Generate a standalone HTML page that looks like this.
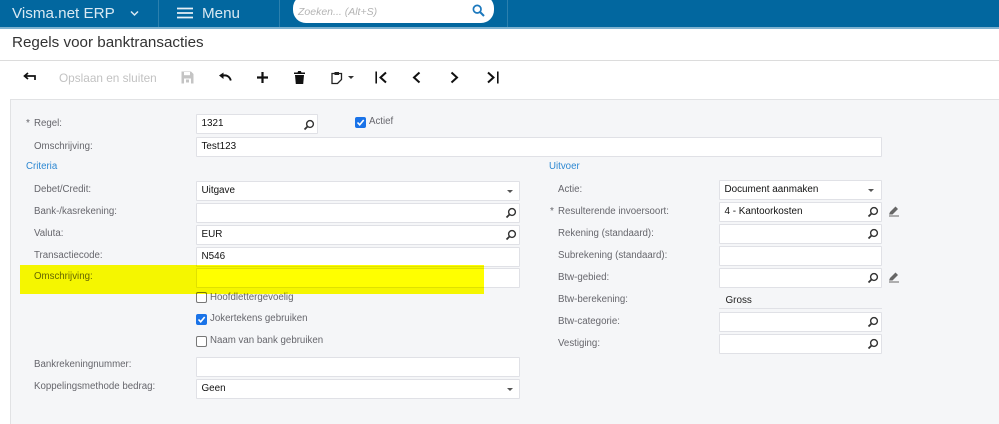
<!DOCTYPE html>
<html><head><meta charset="utf-8">
<style>
html,body{margin:0;padding:0;width:999px;height:424px;overflow:hidden;background:#fff;font-family:"Liberation Sans",sans-serif}
#r{position:relative;width:999px;height:424px;overflow:hidden;filter:blur(.35px)}
#r>*{position:absolute}
.t{white-space:nowrap;line-height:14px}
.l{font-size:9.7px;color:#66666c;white-space:nowrap;line-height:14px}
.b{box-sizing:border-box;background:#fff;border:1.5px solid #e0e1e6;border-radius:1px;height:20px;font-size:9.9px;line-height:17.5px;color:#111;padding-left:4.5px;white-space:nowrap}
.u{line-height:18.5px}
.h{font-size:9.7px;color:#2d88d2;line-height:14px}
.s{width:12px;height:12px}
.c{box-sizing:border-box;width:11px;height:11px;border-radius:2px;border:1.3px solid #777;background:#fff}
.k{width:11px;height:11px;border-radius:2px;background:#1a73e8}
.a{width:0;height:0;border-left:3.5px solid transparent;border-right:3.5px solid transparent;border-top:3.5px solid #555}
</style></head><body>
<svg width="0" height="0" style="position:absolute"><defs>
<g id="m"><circle cx="7" cy="5" r="3.4" fill="none" stroke="#333" stroke-width="1.4"/><path d="M4.5 7.5L1.5 10.5" stroke="#333" stroke-width="1.8"/></g>
<g id="p"><path d="M1 9.5L2 7 7.5 1.5 10 4 4.5 9.5Z" fill="#666"/><path d="M1 11H11" stroke="#666" stroke-width="1"/></g>
</defs></svg>
<div id="r">
<div style="left:0;top:0;width:999px;height:27px;background:#02679f"></div>
<div style="left:0;top:27px;width:999px;height:2px;background:#7fb2d0"></div>
<div style="left:158px;top:0;width:1px;height:27px;background:#2b80ae"></div>
<div style="left:279px;top:0;width:1px;height:27px;background:#2b80ae"></div>
<div style="left:507px;top:0;width:1px;height:27px;background:#2b80ae"></div>
<div class="t" style="left:12px;top:5px;font-size:15.2px;line-height:18px;color:#d9e9f3">Visma.net ERP</div>
<svg style="left:130px;top:10px" width="9" height="7"><path d="M1 1.5L4.5 5 8 1.5" fill="none" stroke="#d9e9f3" stroke-width="1.5"/></svg>
<svg style="left:177px;top:7px" width="16" height="12"><path d="M0 1.5H16M0 6H16M0 10.5H16" stroke="#e6f0f6" stroke-width="1.8"/></svg>
<div class="t" style="left:202px;top:5px;font-size:15.2px;line-height:18px;color:#d9e9f3">Menu</div>
<div style="left:293px;top:-5px;width:201px;height:28px;background:#fff;border-radius:13px"></div>
<div class="t" style="left:298px;top:5px;font-size:10.5px;font-style:italic;color:#b4b4b4">Zoeken... (Alt+S)</div>
<svg style="left:472px;top:4px" width="13" height="13"><circle cx="5.2" cy="5.2" r="3.8" fill="none" stroke="#1b78bd" stroke-width="1.7"/><path d="M8 8L12 12" stroke="#1b78bd" stroke-width="2"/></svg>

<div class="t" style="left:12px;top:34px;font-size:15.2px;line-height:18px;color:#333">Regels voor banktransacties</div>
<div style="left:0;top:60px;width:999px;height:1px;background:#dcdcdc"></div>

<svg style="left:23px;top:72px" width="13" height="10"><path d="M5 1L1.5 4 5 7" fill="none" stroke="#111" stroke-width="1.7"/><path d="M2 4H12V8" fill="none" stroke="#111" stroke-width="1.7"/></svg>
<div class="t" style="left:59px;top:71px;font-size:11.8px;color:#c2c2c2">Opslaan en sluiten</div>
<svg style="left:181px;top:71px" width="13" height="13"><path d="M0.5 0.5H10L12.5 3V12.5H0.5Z" fill="#c4c4c4"/><rect x="3" y="1" width="6" height="3.2" fill="#fff"/><rect x="3" y="7.5" width="7" height="5" fill="#fff"/><rect x="5" y="8.5" width="3" height="3" fill="#c4c4c4"/></svg>
<svg style="left:218px;top:72px" width="14" height="10"><path d="M1 3.5L5.5 0.5V7Z" fill="#111"/><path d="M4 3.8C8 2.6 11.5 4 12.8 8.5" fill="none" stroke="#111" stroke-width="1.9"/></svg>
<svg style="left:257px;top:72px" width="11" height="11"><path d="M5.5 0V11M0 5.5H11" stroke="#111" stroke-width="2.2"/></svg>
<svg style="left:294px;top:71px" width="11" height="13"><path d="M0 1.5H3.5L4.2 0H6.8L7.5 1.5H11V3H0Z" fill="#111"/><path d="M1 4H10L9.2 13H1.8Z" fill="#111"/></svg>
<svg style="left:331px;top:71px" width="12" height="14"><path d="M3.5 2.5H1V12.5H6.5L10.5 8.5V2.5H8" fill="none" stroke="#222" stroke-width="1.3"/><rect x="3.5" y="1" width="4.5" height="3" fill="#222"/></svg>
<div class="a" style="left:348px;top:76px;border-top-color:#333"></div>
<svg style="left:375px;top:71px" width="13" height="13"><path d="M1.2 0.5V12.5" stroke="#111" stroke-width="1.6"/><path d="M11 1.5L5.5 6.5 11 11.5" fill="none" stroke="#111" stroke-width="2"/></svg>
<svg style="left:412px;top:71px" width="9" height="13"><path d="M7.5 1.5L2 6.5 7.5 11.5" fill="none" stroke="#111" stroke-width="2"/></svg>
<svg style="left:450px;top:71px" width="9" height="13"><path d="M1.5 1.5L7 6.5 1.5 11.5" fill="none" stroke="#111" stroke-width="2"/></svg>
<svg style="left:486px;top:71px" width="13" height="13"><path d="M11.8 0.5V12.5" stroke="#111" stroke-width="1.6"/><path d="M2 1.5L7.5 6.5 2 11.5" fill="none" stroke="#111" stroke-width="2"/></svg>

<div style="left:10px;top:99px;width:995px;height:330px;box-sizing:border-box;background:#f5f6f8;border:1.5px solid #e1e2e4"></div>

<div class="l" style="left:26px;top:117px;font-size:10px">*</div>
<div class="l" style="left:34px;top:117px">Regel:</div>
<div class="b u" style="left:196px;top:114px;width:122px">1321</div>
<svg class="s" style="left:303px;top:119px"><use href="#m"/></svg>
<div class="k" style="left:355px;top:117px"></div>
<svg style="left:355px;top:117px" width="11" height="11"><path d="M2.5 5.5L4.7 7.8 8.7 3" fill="none" stroke="#fff" stroke-width="1.6"/></svg>
<div class="l" style="left:369px;top:115px">Actief</div>
<div class="l" style="left:34px;top:140px">Omschrijving:</div>
<div class="b" style="left:196px;top:136.5px;width:686px">Test123</div>

<div class="h" style="left:26px;top:160px">Criteria</div>
<div class="l" style="left:34px;top:183px">Debet/Credit:</div>
<div class="b" style="left:196px;top:181px;width:324px">Uitgave</div>
<div class="a" style="left:507px;top:190px"></div>
<div class="l" style="left:34px;top:205px">Bank-/kasrekening:</div>
<div class="b" style="left:196px;top:203px;width:324px"></div>
<svg class="s" style="left:505px;top:207px"><use href="#m"/></svg>
<div class="l" style="left:34px;top:227px">Valuta:</div>
<div class="b" style="left:196px;top:225px;width:324px">EUR</div>
<svg class="s" style="left:505px;top:229px"><use href="#m"/></svg>
<div class="l" style="left:34px;top:249px">Transactiecode:</div>
<div class="b" style="left:196px;top:247px;width:324px">N546</div>
<div class="l" style="left:34px;top:270px">Omschrijving:</div>
<div class="b" style="left:196px;top:267.5px;width:324px"></div>
<div class="c" style="left:196px;top:292px"></div>
<div class="l" style="left:210px;top:291px">Hoofdlettergevoelig</div>
<div class="k" style="left:196px;top:314px"></div>
<svg style="left:196px;top:314px" width="11" height="11"><path d="M2.5 5.5L4.7 7.8 8.7 3" fill="none" stroke="#fff" stroke-width="1.6"/></svg>
<div class="l" style="left:210px;top:312px">Jokertekens gebruiken</div>
<div class="c" style="left:196px;top:336px"></div>
<div class="l" style="left:210px;top:334px">Naam van bank gebruiken</div>
<div class="l" style="left:34px;top:358px">Bankrekeningnummer:</div>
<div class="b" style="left:196px;top:356.5px;width:324px"></div>
<div class="l" style="left:34px;top:380px">Koppelingsmethode bedrag:</div>
<div class="b" style="left:196px;top:378.5px;width:324px">Geen</div>
<div class="a" style="left:507px;top:388px"></div>

<div class="h" style="left:549px;top:160px">Uitvoer</div>
<div class="l" style="left:558px;top:183px">Actie:</div>
<div class="b u" style="left:719px;top:180px;width:163px">Document aanmaken</div>
<div class="a" style="left:868px;top:189px"></div>
<div class="l" style="left:550px;top:205px;font-size:10px">*</div>
<div class="l" style="left:558px;top:205px">Resulterende invoersoort:</div>
<div class="b u" style="left:719px;top:202px;width:163px">4 - Kantoorkosten</div>
<svg class="s" style="left:867px;top:206px"><use href="#m"/></svg>
<svg class="s" style="left:888px;top:205px"><use href="#p"/></svg>
<div class="l" style="left:558px;top:227px">Rekening (standaard):</div>
<div class="b" style="left:719px;top:224px;width:163px"></div>
<svg class="s" style="left:867px;top:228px"><use href="#m"/></svg>
<div class="l" style="left:558px;top:249px">Subrekening (standaard):</div>
<div class="b" style="left:719px;top:246px;width:163px"></div>
<div class="l" style="left:558px;top:271px">Btw-gebied:</div>
<div class="b" style="left:719px;top:268px;width:163px"></div>
<svg class="s" style="left:867px;top:272px"><use href="#m"/></svg>
<svg class="s" style="left:888px;top:271px"><use href="#p"/></svg>
<div class="l" style="left:558px;top:293px">Btw-berekening:</div>
<div class="t" style="left:725.5px;top:294px;font-size:9.9px;color:#222">Gross</div>
<div style="left:719px;top:308px;width:163px;height:1px;background:#e0e1e6"></div>
<div class="l" style="left:558px;top:315px">Btw-categorie:</div>
<div class="b" style="left:719px;top:311.5px;width:163px"></div>
<svg class="s" style="left:867px;top:316px"><use href="#m"/></svg>
<div class="l" style="left:558px;top:337px">Vestiging:</div>
<div class="b" style="left:719px;top:333.5px;width:163px"></div>
<svg class="s" style="left:867px;top:338px"><use href="#m"/></svg>

<div style="left:19.5px;top:265px;width:464.5px;height:29px;background:#ffff00;mix-blend-mode:multiply"></div>
</div>
</body></html>
